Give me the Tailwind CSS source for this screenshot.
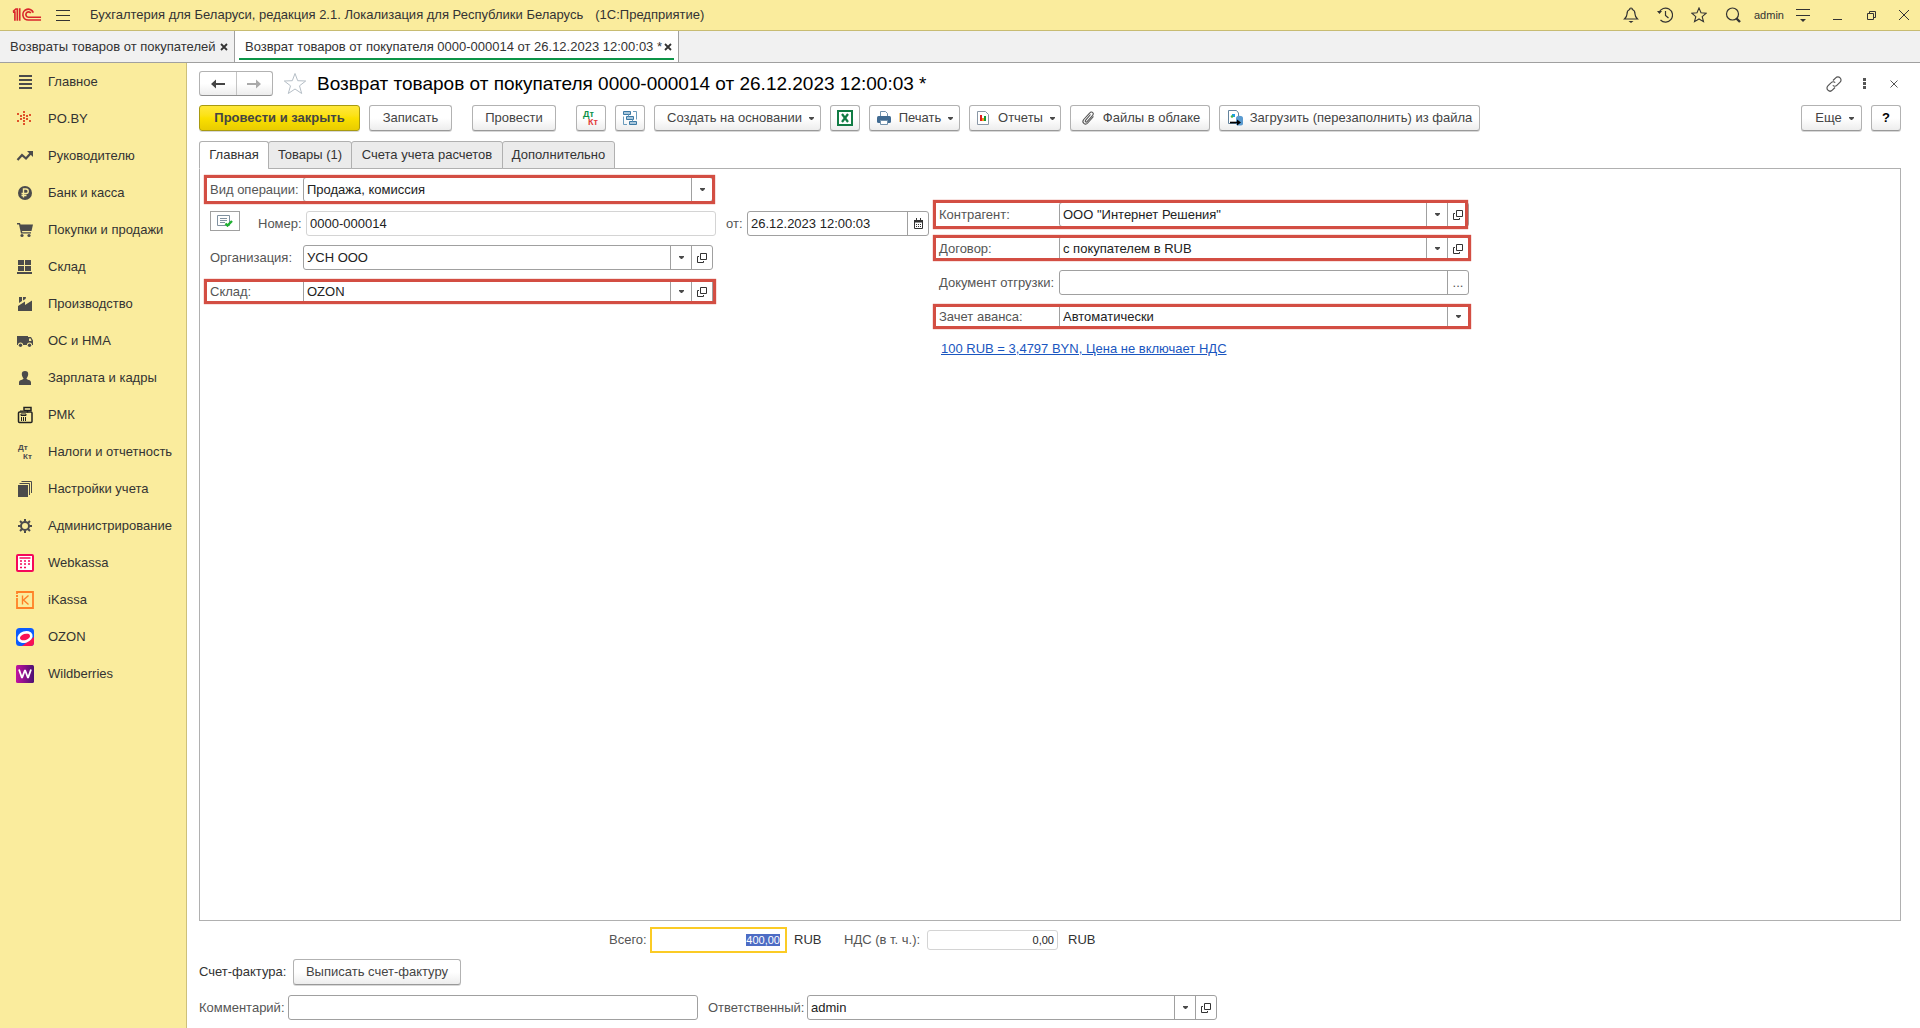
<!DOCTYPE html>
<html lang="ru">
<head>
<meta charset="utf-8">
<meta name="viewport" content="width=device-width, initial-scale=1">
<title>Возврат товаров от покупателя 0000-000014</title>
<script src="https://cdn.jsdelivr.net/npm/@tailwindcss/browser@4"></script>
</head>
<body class="flex min-h-screen flex-col bg-white font-['Liberation_Sans',Arial,sans-serif] text-[13px] leading-4 text-[#333]">

<!-- Shared icons -->
<svg class="hidden" aria-hidden="true">
  <symbol id="caret" viewBox="0 0 5 3"><path d="M0 0h5v1L3 3H2L0 1z" fill="#4a4a4a"/></symbol>
  <symbol id="open" viewBox="0 0 10 10"><path d="M3.500.5h6v6h-6zM2 3.500H.5v6h6V8" fill="none" stroke="currentColor"/></symbol>
</svg>

<!-- Application bar -->
<header class="flex h-[31px] shrink-0 items-center border-b border-[#c8bc72] bg-[#faec9d] pl-3 whitespace-nowrap">
  <svg class="h-4 w-[30px] shrink-0" viewBox="0 0 31 16" fill="none" stroke="#d9262c" stroke-width="1.700" aria-label="1С">
    <path d="M1 4.500 4 1.800h1.500V14M8 1v13M1 5h2v9"/>
    <path d="M22 5.500A5.600 5.600 0 1 0 17 13.200H30"/><path d="M19.500 6A2.800 2.800 0 1 0 17 10.300H30"/>
  </svg>
  <button class="ml-3.5 shrink-0" aria-label="Меню"><svg class="h-[13px] w-[14px]" viewBox="0 0 14 13" stroke="#333"><path d="M0 1.500h14M0 6.500h14M0 11.500h14"/></svg></button>
  <div class="ml-5 flex gap-3"><span>Бухгалтерия для Беларуси, редакция 2.1. Локализация для Республики Беларусь</span><span>(1С:Предприятие)</span></div>
  <div class="ml-auto flex items-center text-[#333]">
    <button class="w-[34px]" aria-label="Уведомления"><svg class="mx-auto h-4 w-4" viewBox="0 0 16 16" fill="none" stroke="currentColor" stroke-width="1.200"><path d="M8 1a1.300 1.300 0 0 0-1.300 1.500C4.500 3.200 4 5 4 7c0 2.500-1 3.500-2.500 5h13C13 10.500 12 9.500 12 7c0-2-.5-3.800-2.700-4.500A1.300 1.300 0 0 0 8 1z"/><path d="M5.500 14h5L8 16z" fill="currentColor" stroke="none"/></svg></button>
    <button class="w-[34px]" aria-label="История"><svg class="mx-auto h-4 w-4" viewBox="0 0 16 16" fill="none" stroke="currentColor" stroke-width="1.200"><path d="M2 5.500A7 7 0 1 1 3.500 13M8.500 4v4.500l3 2.500"/><path d="M0 4l2.500 3L5 4z" fill="currentColor" stroke="none"/></svg></button>
    <button class="w-[34px]" aria-label="Избранное"><svg class="mx-auto h-4 w-4" viewBox="0 0 16 16" fill="none" stroke="currentColor" stroke-width="1.100"><path d="m8 1 2 4.800 5.200.4-4 3.400 1.300 5.100L8 12l-4.500 2.700 1.300-5.100-4-3.400 5.200-.4z"/></svg></button>
    <button class="w-[34px]" aria-label="Поиск"><svg class="mx-auto h-4 w-4" viewBox="0 0 16 16" fill="none" stroke="currentColor" stroke-width="1.200"><circle cx="7.500" cy="7" r="6"/><path d="m11.500 11.500 3.500 3.500" stroke-width="2.400"/></svg></button>
    <span class="ml-1 w-8 text-[11px]">admin</span>
    <button class="w-[34px]" aria-label="Настройки"><svg class="mx-auto h-[13px] w-[14px]" viewBox="0 0 14 13" fill="none" stroke="currentColor"><path d="M0 .5h14M0 6.500h14"/><path d="M4 10h6l-3 3z" fill="currentColor" stroke="none"/></svg></button>
    <button class="w-[34px]" aria-label="Свернуть"><svg class="mx-auto h-[10px] w-[9px]" viewBox="0 0 9 10" stroke="currentColor"><path d="M0 9.500h9"/></svg></button>
    <button class="w-[34px]" aria-label="Восстановить"><svg class="mx-auto h-[9px] w-[9px]" viewBox="0 0 9 9" fill="none" stroke="currentColor"><path d="M.5 2.500h6v6h-6zM2.500 2.500v-2h6v6h-2"/></svg></button>
    <button class="w-[32px]" aria-label="Закрыть"><svg class="mx-auto h-[10px] w-[10px]" viewBox="0 0 10 10" stroke="currentColor"><path d="m0 0 10 10M10 0 0 10"/></svg></button>
  </div>
</header>

<!-- Open windows -->
<nav class="flex h-8 shrink-0 border-b border-[#a0a0a0] bg-[#f1f1f1] whitespace-nowrap">
  <div class="flex items-center border-r border-[#a0a0a0] pl-2.5 pr-1.5">
    <a href="#" class="w-[205px]">Возвраты товаров от покупателей</a>
    <button class="ml-[5px]" aria-label="Закрыть вкладку"><svg class="h-2 w-2" viewBox="0 0 8 8" stroke="#333" stroke-width="1.800"><path d="m1 1 6 6M7 1 1 7"/></svg></button>
  </div>
  <div class="flex flex-col border-r border-[#a0a0a0] bg-white px-1">
    <div class="flex flex-1 items-center border-b-2 border-[#0c9447] pl-1.5 pr-0.5 pt-1">
      <a href="#" class="w-[416px]">Возврат товаров от покупателя 0000-000014 от 26.12.2023 12:00:03 *</a>
      <button class="ml-[3px]" aria-label="Закрыть вкладку"><svg class="h-2 w-2" viewBox="0 0 8 8" stroke="#333" stroke-width="1.800"><path d="m1 1 6 6M7 1 1 7"/></svg></button>
    </div>
    <div class="h-0.5"></div>
  </div>
</nav>

<div class="flex flex-1">
  <!-- Sections -->
  <aside class="w-[187px] shrink-0 border-r border-[#cdc07a] bg-[#faec9d] text-[#333]">
    <ul class="[&_a]:flex [&_a]:h-[37px] [&_a]:items-center [&_a]:gap-3.5 [&_a]:pl-4 [&_svg]:h-[18px] [&_svg]:w-[18px] [&_svg]:shrink-0 [&_svg]:text-[#4b4b4b] whitespace-nowrap">
      <li><a href="#"><svg viewBox="0 0 18 18" fill="currentColor"><path d="M3 2h13v2H3zM3 6h13v2H3zM3 10h13v2H3zM3 14h13v2H3z"/></svg>Главное</a></li>
      <li><a href="#"><svg viewBox="0 0 18 18" fill="#e0532a"><path d="M7 1h2v2H7zM7 4h2v2H7zM7 7h2v2H7zM7 10h2v2H7zM7 13h2v2H7zM4 5h2v2H4zM10 5h2v2h-2zM4 8h2v2H4zM10 8h2v2h-2zM1 3h2v2H1zM13 4h2v2h-2zM1 10h2v2H1zM13 10h2v2h-2z"/></svg>PO.BY</a></li>
      <li><a href="#"><svg viewBox="0 0 18 18"><path d="M1.500 13 6 8l4 3.500 4.500-5" fill="none" stroke="currentColor" stroke-width="2.200"/><path d="M11 4h6v6z" fill="currentColor"/></svg>Руководителю</a></li>
      <li><a href="#"><svg viewBox="0 0 18 18"><circle cx="9" cy="9" r="7" fill="currentColor"/><path d="M7.500 13.500V5H10a2.200 2.200 0 0 1 0 4.500H5.500M5.500 11.500h5" fill="none" stroke="#faec9d" stroke-width="1.400"/></svg>Банк и касса</a></li>
      <li><a href="#"><svg viewBox="0 0 18 18" fill="currentColor"><path d="M1 2h3l.5 1.500H17L15.500 10H6l.3 1.200H15V12.500H5L3 3.500H1z"/><circle cx="6" cy="14.500" r="1.600"/><circle cx="13" cy="14.500" r="1.600"/></svg>Покупки и продажи</a></li>
      <li><a href="#"><svg viewBox="0 0 18 18" fill="currentColor"><path d="M2 2h6v5H2zM9 2h6v5H9zM2 8h6v5H2zM9 8h6v5H9zM1 14h15v2H1z"/></svg>Склад</a></li>
      <li><a href="#"><svg viewBox="0 0 18 18" fill="currentColor"><path d="M2 16v-5l7-4.500V10l7-4.500V16zM3 2h3v4L3 8zM7 2h3l-.5 2L7 5.500z"/></svg>Производство</a></li>
      <li><a href="#"><svg viewBox="0 0 18 18"><path d="M1 4h11v9H1zM12 5h3l2 3.500V13h-5z" fill="currentColor"/><path d="M13 6.500h1.700L15.500 9H13z" fill="#faec9d"/><circle cx="4.500" cy="13" r="2.600" fill="#faec9d"/><circle cx="13.500" cy="13" r="2.600" fill="#faec9d"/><circle cx="4.500" cy="13.200" r="1.700" fill="currentColor"/><circle cx="13.500" cy="13.200" r="1.700" fill="currentColor"/></svg>ОС и НМА</a></li>
      <li><a href="#"><svg viewBox="0 0 18 18" fill="currentColor"><path d="M9 2a3.200 3.200 0 0 0-3.200 3.300C5.800 7 7 9 7.500 9.500 7.500 11 3 10.500 3 13.500V16h12v-2.500c0-3-4.500-2.500-4.500-4C11 9 12.200 7 12.200 5.300A3.200 3.200 0 0 0 9 2z"/></svg>Зарплата и кадры</a></li>
      <li><a href="#"><svg viewBox="0 0 18 18" fill="none" stroke="#222"><path d="M8 1.500h7v3H8zM11.500 4.500v2" stroke-width="1.500"/><rect x="2.500" y="6" width="13.500" height="10.500" rx="1" stroke-width="1.500"/><path d="M5 8h5v1.500H5z"/><path d="M5.500 11v4M7.500 11v4M9.500 11v4M4 5h3"/></svg>РМК</a></li>
      <li><a href="#"><svg viewBox="0 0 18 18" fill="currentColor" font-family="Liberation Sans" font-weight="bold" font-size="8"><text x="2" y="7">Дт</text><text x="7" y="16">Кт</text></svg>Налоги и отчетность</a></li>
      <li><a href="#"><svg viewBox="0 0 18 18" fill="none" stroke="currentColor"><path d="M2 5h10v12H2z" fill="currentColor" stroke="none"/><path d="M3.500 3.500h10V15M5.500 1.500h10V13"/></svg>Настройки учета</a></li>
      <li><a href="#"><svg viewBox="0 0 18 18" fill="none" stroke="currentColor"><circle cx="9" cy="9" r="4" stroke-width="2"/><path d="M9 2v2.500M9 13.500V16M2 9h2.500M13.500 9H16M4 4l1.800 1.800M12.200 12.200 14 14M14 4l-1.800 1.800M5.800 12.200 4 14" stroke-width="2"/></svg>Администрирование</a></li>
      <li><a href="#"><svg viewBox="0 0 18 18"><rect x="1" y="1" width="16" height="16" rx="1" fill="#fff" stroke="#f5085a" stroke-width="2"/><path d="M3.500 4h11M4 7h2M8 7h2M12 7h2M4 10h2M8 10h2M12 10h2M4 13.500h2M8 13.500h2" stroke="#f5085a" stroke-width="1.600"/></svg>Webkassa</a></li>
      <li><a href="#"><svg viewBox="0 0 18 18" fill="none" stroke="#ff8126"><path d="M1 3V1h16v16H1v-2M0 5h2M1 7v8" stroke-width="1.800"/><path d="M6.500 4.500v9M12.500 4.500l-5 4.500 5 4.500" stroke-width="1.400"/></svg>iKassa</a></li>
      <li><a href="#"><svg viewBox="0 0 18 18"><rect width="18" height="18" rx="3.500" fill="#0b5cff"/><path d="M18 9v5.500a3.500 3.500 0 0 1-3.500 3.500H6z" fill="#f91155"/><ellipse cx="9" cy="9" rx="6.500" ry="4.400" transform="rotate(-18 9 9)" fill="#f91155" stroke="#fff" stroke-width="2.600"/></svg>OZON</a></li>
      <li><a href="#"><svg viewBox="0 0 18 18"><defs><linearGradient id="wb"><stop stop-color="#c312a0"/><stop offset="1" stop-color="#4b1173"/></linearGradient></defs><rect width="18" height="18" rx="1.500" fill="url(#wb)"/><path d="m3 4.500 3 8.500L9 5l3 8 3-8.500" fill="none" stroke="#fff" stroke-width="1.800" stroke-linejoin="bevel"/></svg>Wildberries</a></li>
    </ul>
  </aside>

  <main class="flex min-w-0 flex-1 flex-col pb-2 pl-3 pr-[19px] pt-2">
    <!-- Title row -->
    <div class="flex h-[25px] items-center whitespace-nowrap">
      <div class="flex h-[25px] w-[74px] rounded-[3px] border border-[#b2b2b2] border-b-[#8f8f8f] bg-linear-to-b from-white from-50% to-[#ededed]">
        <button class="flex-1 border-r border-[#c4c4c4]" aria-label="Назад"><svg class="mx-auto h-[10px] w-[14px]" viewBox="0 0 14 10" fill="#444"><path d="M0 5l5-4.500V4h9v2H5v3.500z"/></svg></button>
        <button class="flex-1" aria-label="Вперед"><svg class="mx-auto h-[10px] w-[14px]" viewBox="0 0 14 10" fill="#aaa"><path d="M14 5 9 .5V4H0v2h9v3.500z"/></svg></button>
      </div>
      <button class="ml-2.5" aria-label="В избранное"><svg class="h-[23px] w-6" viewBox="0 0 24 23" fill="none" stroke="#b5bec6"><path d="m12 1.500 2.700 7.200 8 .3-6.200 4.800 2.200 7.700L12 17l-6.700 4.500 2.200-7.700L1.300 9l8-.3z"/></svg></button>
      <h1 class="ml-2.5 text-[19px] leading-6 text-black">Возврат товаров от покупателя 0000-000014 от 26.12.2023 12:00:03 *</h1>
      <div class="ml-auto flex items-center gap-4 pr-0.5 text-[#555]">
        <button aria-label="Ссылка"><svg class="h-4 w-4" viewBox="0 0 16 16" fill="none" stroke="currentColor" stroke-width="1.200"><path d="m7 4.500 2.700-2.700a3 3 0 0 1 4.400 4.400l-3.300 3.200a2.800 2.800 0 0 1-4 0M9 11.500l-2.700 2.700a3 3 0 0 1-4.400-4.400l3.300-3.200a2.800 2.800 0 0 1 4 0"/></svg></button>
        <button aria-label="Действия"><svg class="h-3 w-3" viewBox="0 0 12 12" fill="currentColor"><path d="M5 0h3v3H5zM5 4h3v3H5zM5 8h3v3H5z"/></svg></button>
        <button class="ml-[3px]" aria-label="Закрыть"><svg class="h-2 w-2.5" viewBox="0 0 10 8" stroke="currentColor"><path d="m1.500.5 7 7M8.500.5l-7 7"/></svg></button>
      </div>
    </div>

    <!-- Command bar -->
    <div class="mt-[9px] flex gap-[9px] whitespace-nowrap text-[#444] [&_button]:flex [&_button]:h-[26px] [&_button]:shrink-0 [&_button]:items-center [&_button]:justify-center [&_button]:rounded-[3px] [&_button]:border [&_button]:shadow-[0_1px_0_#d8d8d8]">
      <button class="w-[161px] border-[#a89a10] bg-linear-to-b from-[#ffe838] via-[#fbe000] to-[#e8cc00] font-bold">Провести и закрыть</button>
      <button class="w-[83px] border-[#b2b2b2] border-b-[#999] bg-linear-to-b from-white from-50% to-[#ededed]">Записать</button>
      <button class="ml-[11px] w-[84px] border-[#b2b2b2] border-b-[#999] bg-linear-to-b from-white from-50% to-[#ededed]">Провести</button>
      <button class="ml-[11px] w-[30px] border-[#b2b2b2] border-b-[#999] bg-linear-to-b from-white from-50% to-[#ededed]" aria-label="Проводки"><svg class="h-[18px] w-[18px]" viewBox="0 0 18 18" font-family="Liberation Sans" font-weight="bold" font-size="9"><text x="1" y="8" fill="#0d9148">Дт</text><text x="6" y="16" fill="#e23b3b">Кт</text></svg></button>
      <button class="w-[30px] border-[#b2b2b2] border-b-[#999] bg-linear-to-b from-white from-50% to-[#ededed]" aria-label="Структура подчиненности"><svg class="h-4 w-4" viewBox="0 0 16 16" fill="#a9c7dc" stroke="#3c7aa5"><path d="M1.500 1.500h7v3h-7zM4.500 6.500h7v3h-7zM7.500 11.500h7v3h-7z"/><path d="M11 1.500h3.500v8M1.500 6.500v8H5M6.500 4.500v2M10.500 9.500v2" fill="none" stroke="#6b9cbd"/></svg></button>
      <button class="w-[167px] gap-[7px] border-[#b2b2b2] border-b-[#999] bg-linear-to-b from-white from-50% to-[#ededed] pl-1.5">Создать на основании<svg class="h-[3px] w-[5px]"><use href="#caret"/></svg></button>
      <button class="w-[30px] border-[#b2b2b2] border-b-[#999] bg-linear-to-b from-white from-50% to-[#ededed]" aria-label="Excel"><svg class="h-4 w-4" viewBox="0 0 16 16" fill="none" stroke="#117c44"><path d="M1 1h14v14H1z" stroke-width="2" fill="#fff"/><path d="m5 4 6 8M11 4l-6 8" stroke-width="2.200"/></svg></button>
      <button class="w-[91px] gap-[7px] border-[#b2b2b2] border-b-[#999] bg-linear-to-b from-white from-50% to-[#ededed]"><svg class="h-4 w-4" viewBox="0 0 16 16"><path d="M4.500 7V1.500h5l2 2V7" fill="#fff" stroke="#7392ad"/><rect x="1" y="6" width="14" height="7" rx="1.500" fill="#416b92"/><path d="M4.500 10.500h7v4h-7z" fill="#fff" stroke="#7392ad"/></svg>Печать<svg class="h-[3px] w-[5px]"><use href="#caret"/></svg></button>
      <button class="w-[92px] gap-[7px] border-[#b2b2b2] border-b-[#999] bg-linear-to-b from-white from-50% to-[#ededed]"><svg class="h-4 w-4" viewBox="0 0 16 16"><path d="M2.500 1.500h8l3 3v10h-11z" fill="#fff" stroke="#8a98a6"/><path d="M5 5h2v6H5z" fill="#e02020"/><path d="M7 8h2v3H7z" fill="#f29422"/><path d="M9 6h2v5H9z" fill="#119c32"/></svg>Отчеты<svg class="h-[3px] w-[5px]"><use href="#caret"/></svg></button>
      <button class="w-[140px] gap-[7px] border-[#b2b2b2] border-b-[#999] bg-linear-to-b from-white from-50% to-[#ededed]"><svg class="h-4 w-4" viewBox="0 0 16 16" fill="none" stroke="#555" stroke-width="1.100"><path d="m10.500 4.500-5 5.800c-.9 1.100.6 2.400 1.600 1.300l5.600-6.300c1.800-2.200-1-4.700-2.900-2.500L3.700 9.500c-2.400 2.900 1.500 6.300 4 3.500l5.800-6.500"/></svg>Файлы в облаке</button>
      <button class="w-[261px] gap-[7px] border-[#b2b2b2] border-b-[#999] bg-linear-to-b from-white from-50% to-[#ededed]"><svg class="h-4 w-4" viewBox="0 0 16 16"><path d="M1.500.5h8l2 2.500v10.500h-10z" fill="#fff" stroke="#64839d"/><path d="M5 4h3v3H5z" fill="#1c9ee8"/><circle cx="5" cy="6.500" r="1.300" fill="#47b34b"/><path d="M9 8c0-3 7-3 7 0v6c0 2-7 2-7 0z" fill="#5a9bd0"/><path d="M3 12.500h8" stroke="#000" stroke-width="1.600"/><path d="m10 9.500 4 3-4 3z"/></svg>Загрузить (перезаполнить) из файла</button>
      <div class="ml-auto flex gap-[9px]">
        <button class="w-[61px] gap-[7px] border-[#b2b2b2] border-b-[#999] bg-linear-to-b from-white from-50% to-[#ededed] pl-1.5">Еще<svg class="h-[3px] w-[5px]"><use href="#caret"/></svg></button>
        <button class="w-[30px] border-[#b2b2b2] border-b-[#999] bg-linear-to-b from-white from-50% to-[#ededed] font-bold text-black">?</button>
      </div>
    </div>

    <!-- Form tabs -->
    <div class="relative z-10 -mb-px mt-2.5 flex h-7 text-[#333] [&_button]:border [&_button]:border-[#b0b0b0] [&_button]:rounded-t-[3px] [&_button]:-mr-px" role="tablist">
      <button class="w-[70px] border-b-white! bg-white" role="tab">Главная</button>
      <button class="w-[84px] bg-[#ebebeb]" role="tab">Товары (1)</button>
      <button class="w-[152px] bg-[#ebebeb]" role="tab">Счета учета расчетов</button>
      <button class="w-[113px] bg-[#ebebeb]" role="tab">Дополнительно</button>
    </div>

    <!-- Document form -->
    <section class="flex flex-1 items-start gap-2.5 border border-[#b0b0b0] pl-2.5 pt-2 text-[#555]">
      <div class="flex w-full max-w-[719px] flex-col gap-[9px]">
        <div class="relative flex h-[25px] max-w-[503px] items-center">
          <label for="op" class="w-[93px] shrink-0">Вид операции:</label>
          <div class="relative flex h-full flex-1 rounded-[3px] border border-[#a0a0a0]">
            <select id="op" class="w-full appearance-none pl-[3px] text-[#222] outline-none"><option>Продажа, комиссия</option></select>
            <span class="pointer-events-none absolute inset-y-0 right-0 flex w-[21px] items-center justify-center border-l border-[#a0a0a0]"><svg class="h-[3px] w-[5px]"><use href="#caret"/></svg></span>
          </div>
          <span class="pointer-events-none absolute -inset-y-0.5 -left-1.5 -right-0.5 border-[3px] border-[#d34e43] shadow-[0_0_1px_#d34e43]"></span>
        </div>
        <div class="flex h-[25px] items-center">
          <button class="mb-[5px] flex h-5 w-[30px] shrink-0 items-center justify-center border border-[#a0a0a0]" aria-label="Проведен"><svg class="h-3 w-4" viewBox="0 0 16 12" fill="none"><path d="M.5.5h12v10H.5z" stroke="#8091a0"/><path d="M3 3.500h7M3 5.500h7M3 7.500h5" stroke="#8091a0"/><path d="m8.500 8.500 2 2L15 6" stroke="#20b032" stroke-width="2.400"/></svg></button>
          <label for="num" class="ml-[18px] w-12 shrink-0">Номер:</label>
          <input id="num" value="0000-000014" class="h-full w-0 max-w-[410px] flex-1 rounded-[3px] border border-[#d4d4d4] px-[3px] text-[#222] outline-none">
          <label for="date" class="ml-2.5 w-[21px] shrink-0">от:</label>
          <div class="flex h-full w-[182px] shrink-0 rounded-[3px] border border-[#a0a0a0]">
            <input id="date" value="26.12.2023 12:00:03" class="w-0 flex-1 px-[3px] text-[#222] outline-none">
            <button class="w-[21px] border-l border-[#a0a0a0]" aria-label="Календарь"><svg class="mx-auto h-[11px] w-[9px]" viewBox="0 0 9 11"><path d="M.5 2.500h8v8h-8z" fill="#fff" stroke="#333"/><path d="M0 2h9v2.500H0zM2 0h1v2H2zM6 0h1v2H6z" fill="#333"/><path d="M2 6.500h5M2 8.500h5" stroke="#333" stroke-dasharray="1 1"/></svg></button>
          </div>
        </div>
        <div class="flex h-[25px] max-w-[503px] items-center">
          <label for="org" class="w-[93px] shrink-0">Организация:</label>
          <div class="flex h-full flex-1 rounded-[3px] border border-[#a0a0a0]">
            <div class="relative flex flex-1">
              <select id="org" class="w-full appearance-none pl-[3px] text-[#222] outline-none"><option>УСН ООО</option></select>
              <span class="pointer-events-none absolute inset-y-0 right-0 flex w-[21px] items-center justify-center border-l border-[#a0a0a0]"><svg class="h-[3px] w-[5px]"><use href="#caret"/></svg></span>
            </div>
            <button class="w-[21px] border-l border-[#a0a0a0] text-[#333]" aria-label="Открыть"><svg class="mx-auto h-2.5 w-2.5"><use href="#open"/></svg></button>
          </div>
        </div>
        <div class="relative flex h-[25px] max-w-[503px] items-center">
          <label for="wh" class="w-[93px] shrink-0">Склад:</label>
          <div class="flex h-full flex-1 rounded-[3px] border border-[#a0a0a0]">
            <div class="relative flex flex-1">
              <select id="wh" class="w-full appearance-none pl-[3px] text-[#222] outline-none"><option>OZON</option></select>
              <span class="pointer-events-none absolute inset-y-0 right-0 flex w-[21px] items-center justify-center border-l border-[#a0a0a0]"><svg class="h-[3px] w-[5px]"><use href="#caret"/></svg></span>
            </div>
            <button class="w-[21px] border-l border-[#a0a0a0] text-[#333]" aria-label="Открыть"><svg class="mx-auto h-2.5 w-2.5"><use href="#open"/></svg></button>
          </div>
          <span class="pointer-events-none absolute inset-y-0 -left-1.5 -right-[3px] border-[3px] border-[#d34e43] shadow-[0_0_1px_#d34e43]"></span>
        </div>
      </div>

      <div class="flex w-full max-w-[530px] flex-col gap-[9px] pt-[25px]">
        <div class="relative flex h-[25px] items-center">
          <label for="agent" class="w-[120px] shrink-0">Контрагент:</label>
          <div class="flex h-full flex-1 rounded-[3px] border border-[#a0a0a0]">
            <div class="relative flex flex-1">
              <select id="agent" class="w-full appearance-none pl-[3px] text-[#222] outline-none"><option>ООО "Интернет Решения"</option></select>
              <span class="pointer-events-none absolute inset-y-0 right-0 flex w-[21px] items-center justify-center border-l border-[#a0a0a0]"><svg class="h-[3px] w-[5px]"><use href="#caret"/></svg></span>
            </div>
            <button class="w-[21px] border-l border-[#a0a0a0] text-[#333]" aria-label="Открыть"><svg class="mx-auto h-2.5 w-2.5"><use href="#open"/></svg></button>
          </div>
          <span class="pointer-events-none absolute -inset-y-0.5 -left-1.5 right-px border-[3px] border-[#d34e43] shadow-[0_0_1px_#d34e43]"></span>
        </div>
        <div class="relative flex h-[25px] items-center">
          <label for="contract" class="w-[120px] shrink-0">Договор:</label>
          <div class="flex h-full flex-1 rounded-[3px] border border-[#a0a0a0]">
            <div class="relative flex flex-1">
              <select id="contract" class="w-full appearance-none pl-[3px] text-[#222] outline-none"><option>с покупателем в RUB</option></select>
              <span class="pointer-events-none absolute inset-y-0 right-0 flex w-[21px] items-center justify-center border-l border-[#a0a0a0]"><svg class="h-[3px] w-[5px]"><use href="#caret"/></svg></span>
            </div>
            <button class="w-[21px] border-l border-[#a0a0a0] text-[#333]" aria-label="Открыть"><svg class="mx-auto h-2.5 w-2.5"><use href="#open"/></svg></button>
          </div>
          <span class="pointer-events-none absolute -top-px bottom-0 -left-1.5 -right-0.5 border-[3px] border-[#d34e43] shadow-[0_0_1px_#d34e43]"></span>
        </div>
        <div class="flex h-[25px] items-center">
          <label for="ship" class="w-[120px] shrink-0 whitespace-nowrap">Документ отгрузки:</label>
          <div class="flex h-full flex-1 rounded-[3px] border border-[#a0a0a0]">
            <input id="ship" class="w-0 flex-1 px-[3px] text-[#222] outline-none">
            <button class="w-[21px] border-l border-[#a0a0a0]" aria-label="Выбрать">...</button>
          </div>
        </div>
        <div class="relative flex h-[25px] items-center">
          <label for="adv" class="w-[120px] shrink-0">Зачет аванса:</label>
          <div class="relative flex h-full flex-1 rounded-[3px] border border-[#a0a0a0]">
            <select id="adv" class="w-full appearance-none pl-[3px] text-[#222] outline-none"><option>Автоматически</option></select>
            <span class="pointer-events-none absolute inset-y-0 right-0 flex w-[21px] items-center justify-center border-l border-[#a0a0a0]"><svg class="h-[3px] w-[5px]"><use href="#caret"/></svg></span>
          </div>
          <span class="pointer-events-none absolute inset-y-0 -left-1.5 -right-0.5 border-[3px] border-[#d34e43] shadow-[0_0_1px_#d34e43]"></span>
        </div>
        <a href="#" class="ml-0.5 mt-[3px] self-start text-[#1a56c0] underline">100 RUB = 3,4797 BYN, Цена не включает НДС</a>
      </div>
    </section>

    <!-- Totals -->
    <div class="mt-1.5 flex h-[26px] items-center whitespace-nowrap pl-[410px] text-[#555]">
      <label for="total" class="w-[41px]">Всего:</label>
      <input id="total" value="400,00" autofocus class="h-full w-[137px] border-2 border-[#fbcb25] pr-[5px] text-right text-[11px] text-[#222] outline-none selection:bg-[#4d6cc4] selection:text-white">
      <span class="ml-[7px] w-[50px] text-[#333]">RUB</span>
      <label for="vat" class="w-[83px]">НДС (в т. ч.):</label>
      <input id="vat" value="0,00" class="h-5 w-[131px] rounded-[3px] border border-[#d4d4d4] pr-[3px] text-right text-[11px] text-[#222] outline-none">
      <span class="ml-2.5 text-[#333]">RUB</span>
    </div>
    <div class="mt-1.5 flex h-[26px] items-center">
      <span class="w-[94px]">Счет-фактура:</span>
      <button class="h-[26px] w-[168px] rounded-[3px] border border-[#b2b2b2] border-b-[#999] bg-linear-to-b from-white from-50% to-[#ededed] text-[#444] shadow-[0_1px_0_#d8d8d8]">Выписать счет-фактуру</button>
    </div>
    <div class="mt-2.5 flex h-[25px] items-center text-[#555]">
      <label for="comment" class="w-[89px] shrink-0">Комментарий:</label>
      <input id="comment" class="h-full w-full max-w-[410px] rounded-[3px] border border-[#a0a0a0] px-[3px] text-[#222] outline-none">
      <label for="resp" class="ml-2.5 w-[99px] shrink-0">Ответственный:</label>
      <div class="flex h-full w-full max-w-[410px] rounded-[3px] border border-[#a0a0a0]">
        <div class="relative flex flex-1">
          <select id="resp" class="w-full appearance-none pl-[3px] text-[#222] outline-none"><option>admin</option></select>
          <span class="pointer-events-none absolute inset-y-0 right-0 flex w-[21px] items-center justify-center border-l border-[#a0a0a0]"><svg class="h-[3px] w-[5px]"><use href="#caret"/></svg></span>
        </div>
        <button class="w-[21px] border-l border-[#a0a0a0] text-[#333]" aria-label="Открыть"><svg class="mx-auto h-2.5 w-2.5"><use href="#open"/></svg></button>
      </div>
    </div>
  </main>
</div>
<script>
  const total = document.getElementById('total');
  total.focus();
  total.select();
</script>
</body>
</html>
